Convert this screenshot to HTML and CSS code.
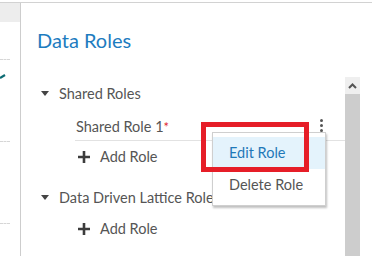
FILE: index.html
```html
<!DOCTYPE html>
<html lang="en">
<head>
    <meta charset="UTF-8">
    <meta name="viewport" content="width=device-width, initial-scale=1.0">
    <title>Data Roles</title>
    <link rel="stylesheet" href="styles.css">
</head>
<body>
    <div class="app">
        <div class="side">
            <div class="side-box"></div>
            <div class="side-rule first"></div>
            <svg class="side-mark" width="6" height="6" viewBox="0 0 6 6"><path d="M0 5 L5 2" stroke="#0d6b73" stroke-width="2.2" fill="none"/></svg>
            <div class="side-rule second"></div>
            <div class="side-rule"></div>
        </div>

        <div class="main">
            <div class="content">
                <h2>Data Roles</h2>

                <div class="group-head"><span class="caret"></span>Shared Roles</div>
                <div class="role-row">
                    <span>Shared Role 1<span class="req">*</span></span>
                    <span class="kebab"><i></i><i></i><i></i></span>
                </div>
                <div class="add-row">
                    <svg class="plus" width="12" height="12" viewBox="0 0 12 12"><path d="M6 0 V12 M0 6 H12" stroke="#3c3c3c" stroke-width="2.6"/></svg>
                    Add Role
                </div>

                <div class="group-head gap"><span class="caret"></span>Data Driven Lattice Roles</div>
                <div class="add-row">
                    <svg class="plus" width="12" height="12" viewBox="0 0 12 12"><path d="M6 0 V12 M0 6 H12" stroke="#3c3c3c" stroke-width="2.6"/></svg>
                    Add Role
                </div>
            </div>

            <div class="scrollbar">
                <div class="scroll-btn">
                    <svg width="9" height="6" viewBox="0 0 9 6"><path d="M1 5 L4.5 1.5 L8 5" stroke="#555" stroke-width="2" fill="none"/></svg>
                </div>
                <div class="scroll-track"></div>
            </div>
        </div>

        <!-- context menu for Shared Role 1 -->
        <div class="menu">
            <div class="menu-item active">Edit Role</div>
            <div class="menu-item">Delete Role</div>
        </div>
        <div class="callout"></div>
    </div>
</body>
</html>
```

FILE: styles.css
```css
body {
    margin: 0;
    font-family: Lato, "Open Sans", sans-serif;
    background-color: white;
    overflow: hidden;
}

.app {
    position: relative;
    display: flex;
    height: 253px;
    margin-top: 2px;
    border-top: 1px solid #d2d2d2;
}

/* left strip */
.side {
    width: 20px;
    border-right: 1px solid #cdcdcd;
    display: flex;
    flex-direction: column;
}

.side-box {
    height: 19px;
    background-color: #ededed;
}

.side-rule {
    width: 10px;
    border-top: 1px dashed #d6d6d6;
    margin-top: 81px;
}

.side-rule.first {
    margin-top: 37px;
}

.side-mark {
    margin-top: 13px;
}

.side-rule.second {
    margin-top: 62px;
}

/* main panel */
.main {
    flex: 1;
    display: flex;
}

.content {
    flex: 1;
    padding-top: 25px;
}

h2 {
    margin: 0 0 25px 16px;
    font-size: 20px;
    line-height: 24px;
    font-weight: normal;
    color: #1d7cc0;
}

.group-head {
    display: flex;
    align-items: center;
    height: 32px;
    padding-left: 20px;
    font-size: 14.5px;
    color: #555;
}

.group-head.gap {
    margin-top: 8px;
}

.caret {
    width: 0;
    height: 0;
    border-left: 4px solid transparent;
    border-right: 4px solid transparent;
    border-top: 5px solid #444;
    margin-right: 10px;
}

.role-row {
    display: flex;
    align-items: center;
    margin-left: 54px;
    padding: 8px 22px 3px 1px;
    line-height: 20px;
    font-size: 14.5px;
    color: #555;
    border-bottom: 1px solid #e2e2e2;
}

.req {
    color: #e0282e;
    font-size: 13px;
    vertical-align: top;
}

.kebab {
    margin-left: auto;
    display: flex;
    flex-direction: column;
    gap: 2px;
    margin-top: -4px;
}

.kebab i {
    width: 3px;
    height: 3px;
    border-radius: 50%;
    background-color: #555;
}

.add-row {
    display: flex;
    align-items: center;
    padding: 6px 0 6px 57px;
    line-height: 20px;
    font-size: 14.5px;
    color: #555;
}

.plus {
    margin-right: 10px;
}

/* scrollbar */
.scrollbar {
    width: 15px;
    margin: 74px 12px 0 0;
    display: flex;
    flex-direction: column;
}

.scroll-btn {
    height: 17px;
    background-color: #efefef;
    display: flex;
    align-items: center;
    justify-content: center;
}

.scroll-track {
    flex: 1;
    background-color: #cdcdcd;
}

/* popup menu */
.menu {
    position: absolute;
    left: 212px;
    top: 129px;
    width: 112px;
    padding: 4px 0;
    background-color: white;
    border: 1px solid #cfcfcf;
    box-shadow: 1px 2px 2px rgba(0, 0, 0, 0.25);
}

.menu-item {
    height: 32px;
    line-height: 32px;
    padding-left: 16px;
    font-size: 14.5px;
    color: #555;
}

.menu-item.active {
    background-color: #e4f3fc;
    color: #1f78b8;
}

.callout {
    position: absolute;
    left: 201px;
    top: 119px;
    width: 98px;
    height: 40px;
    border: 5px solid #e61e28;
}
```
